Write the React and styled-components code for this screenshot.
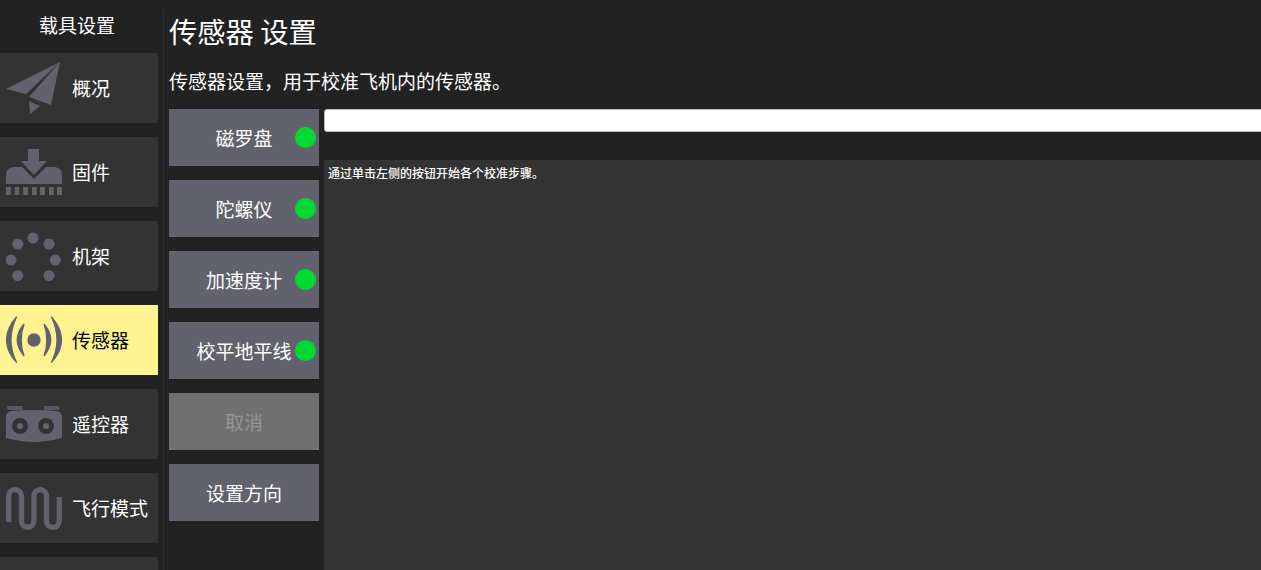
import styled, { createGlobalStyle } from 'styled-components';

const GlobalStyle = createGlobalStyle`
  html, body {
    margin: 0;
    height: 100%;
    background: #222222;
    overflow: hidden;
    font-family: "Noto Sans CJK SC", "Noto Sans", sans-serif;
  }
`;

const iconColor = '#62626e';

const Glyph = styled.svg.attrs({ width: 56, height: 56, viewBox: '0 0 56 56' })`
  display: block;
  flex: none;
  fill: ${iconColor};
`;

const PlaneIcon = () => (
  <Glyph>
    <path d="M0 29 L54 2 L20 34 Z M54 2 L23 37 L45 45 Z M23 41 L34 46 L24 54 Z" />
  </Glyph>
);

const FirmwareIcon = () => (
  <Glyph>
    <path d="M22 5 H33 V17 H41 L28 31 L15 17 H22 Z" />
    <path d="M7 23 H16 L28 35 L40 23 H49 Q56 24 56 31 V40 H0 V31 Q0 24 7 23 Z" />
    <path d="M0 43 H5 V51 H0 Z M8.700 43 H13.300 V51 H8.700 Z M17 43 H22 V51 H17 Z M26 43 H30.700 V51 H26 Z M34 43 H39 V51 H34 Z M43 43 H47.700 V51 H43 Z M51 43 H56 V51 H51 Z" />
  </Glyph>
);

const FrameIcon = () => (
  <Glyph>
    <circle cx="27" cy="10" r="5.5" />
    <circle cx="11.700" cy="16" r="5.5" />
    <circle cx="43" cy="16" r="5.5" />
    <circle cx="5" cy="32" r="5.5" />
    <circle cx="49.300" cy="32" r="5.5" />
    <circle cx="11.700" cy="47.700" r="5.5" />
    <circle cx="43" cy="47.700" r="5.5" />
  </Glyph>
);

const SensorIcon = () => (
  <Glyph>
    <circle cx="28" cy="28" r="6.700" />
    <g stroke={iconColor} strokeWidth="1.200">
      <path d="M18 12 Q4.400 28 18 44 Q12.400 28 18 12 Z" />
      <path d="M38 12 Q51.600 28 38 44 Q43.600 28 38 12 Z" />
      <path d="M10.700 4.700 Q-9.700 28 10.700 50.700 Q-0.700 28 10.700 4.700 Z" />
      <path d="M45.300 4.700 Q65.700 28 45.300 50.700 Q56.700 28 45.300 4.700 Z" />
    </g>
  </Glyph>
);

const RadioIcon = () => (
  <Glyph>
    <path opacity="0.8" d="M1.300 10 H16.700 V14 H1.300 Z M38 10 H53.300 V14 H38 Z" />
    <path d="M5 15 Q28 13 51 15 Q56 16 56 21 V42 Q40 46 28 46 Q16 46 0 42 V21 Q0 16 5 15 Z" />
    <circle cx="14" cy="30" r="5.500" fill="none" stroke="#333333" strokeWidth="5" />
    <circle cx="40" cy="30" r="5.500" fill="none" stroke="#333333" strokeWidth="5" />
  </Glyph>
);

const ModesIcon = () => (
  <Glyph>
    <path
      fill="none"
      stroke={iconColor}
      strokeWidth="5.300"
      d="M2.700 42 V16 A6.400 6.400 0 0 1 15.500 16 V41 A6.250 6.250 0 0 0 28 41 V16 A6.250 6.250 0 0 1 40.500 16 V41 A6.400 6.400 0 0 0 53.300 41 V17"
    />
  </Glyph>
);

const navItems = [
  { label: '概况', Icon: PlaneIcon },
  { label: '固件', Icon: FirmwareIcon },
  { label: '机架', Icon: FrameIcon },
  { label: '传感器', Icon: SensorIcon, active: true },
  { label: '遥控器', Icon: RadioIcon },
  { label: '飞行模式', Icon: ModesIcon },
];

const calibrations = ['磁罗盘', '陀螺仪', '加速度计', '校平地平线'];

const Page = styled.div`
  display: flex;
  height: 570px;
  overflow: hidden;
  background: #222222;
  color: #ffffff;
`;

const Sidebar = styled.nav`
  width: 158px;
  flex: none;
  display: flex;
  flex-direction: column;
  gap: 14px;
`;

const SidebarTitle = styled.div`
  height: 39px;
  flex: none;
  box-sizing: border-box;
  padding-top: 11px;
  font-size: 19px;
  line-height: 28px;
  text-align: center;
  margin-left: -4px;
`;

const NavItem = styled.div`
  height: 70px;
  flex: none;
  display: flex;
  align-items: center;
  gap: 10px;
  padding-left: 6px;
  background: ${(p) => (p.$active ? '#fff291' : '#333333')};
  color: ${(p) => (p.$active ? '#000000' : '#ffffff')};
  font-size: 19px;
`;

const NavLabel = styled.span`
  padding-bottom: 2px;
`;

const Divider = styled.div`
  width: 1px;
  flex: none;
  margin: 10px 0 0 5px;
  background: #303030;
`;

const Content = styled.main`
  flex: 1;
  min-width: 0;
  padding-left: 5px;
  display: flex;
  flex-direction: column;
`;

const Heading = styled.h1`
  margin: 0;
  padding-top: 11px;
  font-size: 28.3px;
  font-weight: 400;
  line-height: 40px;
`;

const Subtitle = styled.p`
  margin: 16px 0 0;
  font-size: 19px;
  line-height: 28px;
`;

const Panels = styled.div`
  flex: 1;
  min-height: 0;
  margin-top: 14px;
  display: flex;
  gap: 5px;
`;

const ButtonColumn = styled.div`
  width: 150px;
  flex: none;
  display: flex;
  flex-direction: column;
  gap: 14px;
`;

const CalButton = styled.div`
  position: relative;
  height: 57px;
  flex: none;
  display: flex;
  align-items: center;
  justify-content: center;
  background: ${(p) => (p.$disabled ? '#707070' : '#62626e')};
  color: ${(p) => (p.$disabled ? '#959595' : '#ffffff')};
  font-size: 19px;
`;

const StatusDot = styled.span`
  position: absolute;
  right: 3px;
  top: 18px;
  width: 21px;
  height: 21px;
  border-radius: 50%;
  background: #00d932;
`;

const RightColumn = styled.div`
  flex: 1;
  min-width: 0;
  display: flex;
  flex-direction: column;
`;

const ProgressBar = styled.div`
  height: 23px;
  flex: none;
  box-sizing: border-box;
  margin-right: -10px;
  background: #ffffff;
  border: 1px solid #b8b8b8;
  border-radius: 3px;
`;

const StatusArea = styled.div`
  flex: 1;
  margin-top: 28px;
  padding: 4px;
  background: #333333;
  font-size: 12px;
  font-weight: 500;
  line-height: 18px;
`;

const App = () => (
  <Page>
    <GlobalStyle />
    <Sidebar>
      <SidebarTitle>载具设置</SidebarTitle>
      {navItems.map(({ label, Icon, active }) => (
        <NavItem key={label} $active={active}>
          <Icon />
          <NavLabel>{label}</NavLabel>
        </NavItem>
      ))}
      <NavItem />
    </Sidebar>
    <Divider />
    <Content>
      <Heading>传感器 设置</Heading>
      <Subtitle>传感器设置，用于校准飞机内的传感器。</Subtitle>
      <Panels>
        <ButtonColumn>
          {calibrations.map((name) => (
            <CalButton key={name}>
              {name}
              <StatusDot />
            </CalButton>
          ))}
          <CalButton $disabled>取消</CalButton>
          <CalButton>设置方向</CalButton>
        </ButtonColumn>
        <RightColumn>
          <ProgressBar />
          <StatusArea>通过单击左侧的按钮开始各个校准步骤。</StatusArea>
        </RightColumn>
      </Panels>
    </Content>
  </Page>
);

export default App;
